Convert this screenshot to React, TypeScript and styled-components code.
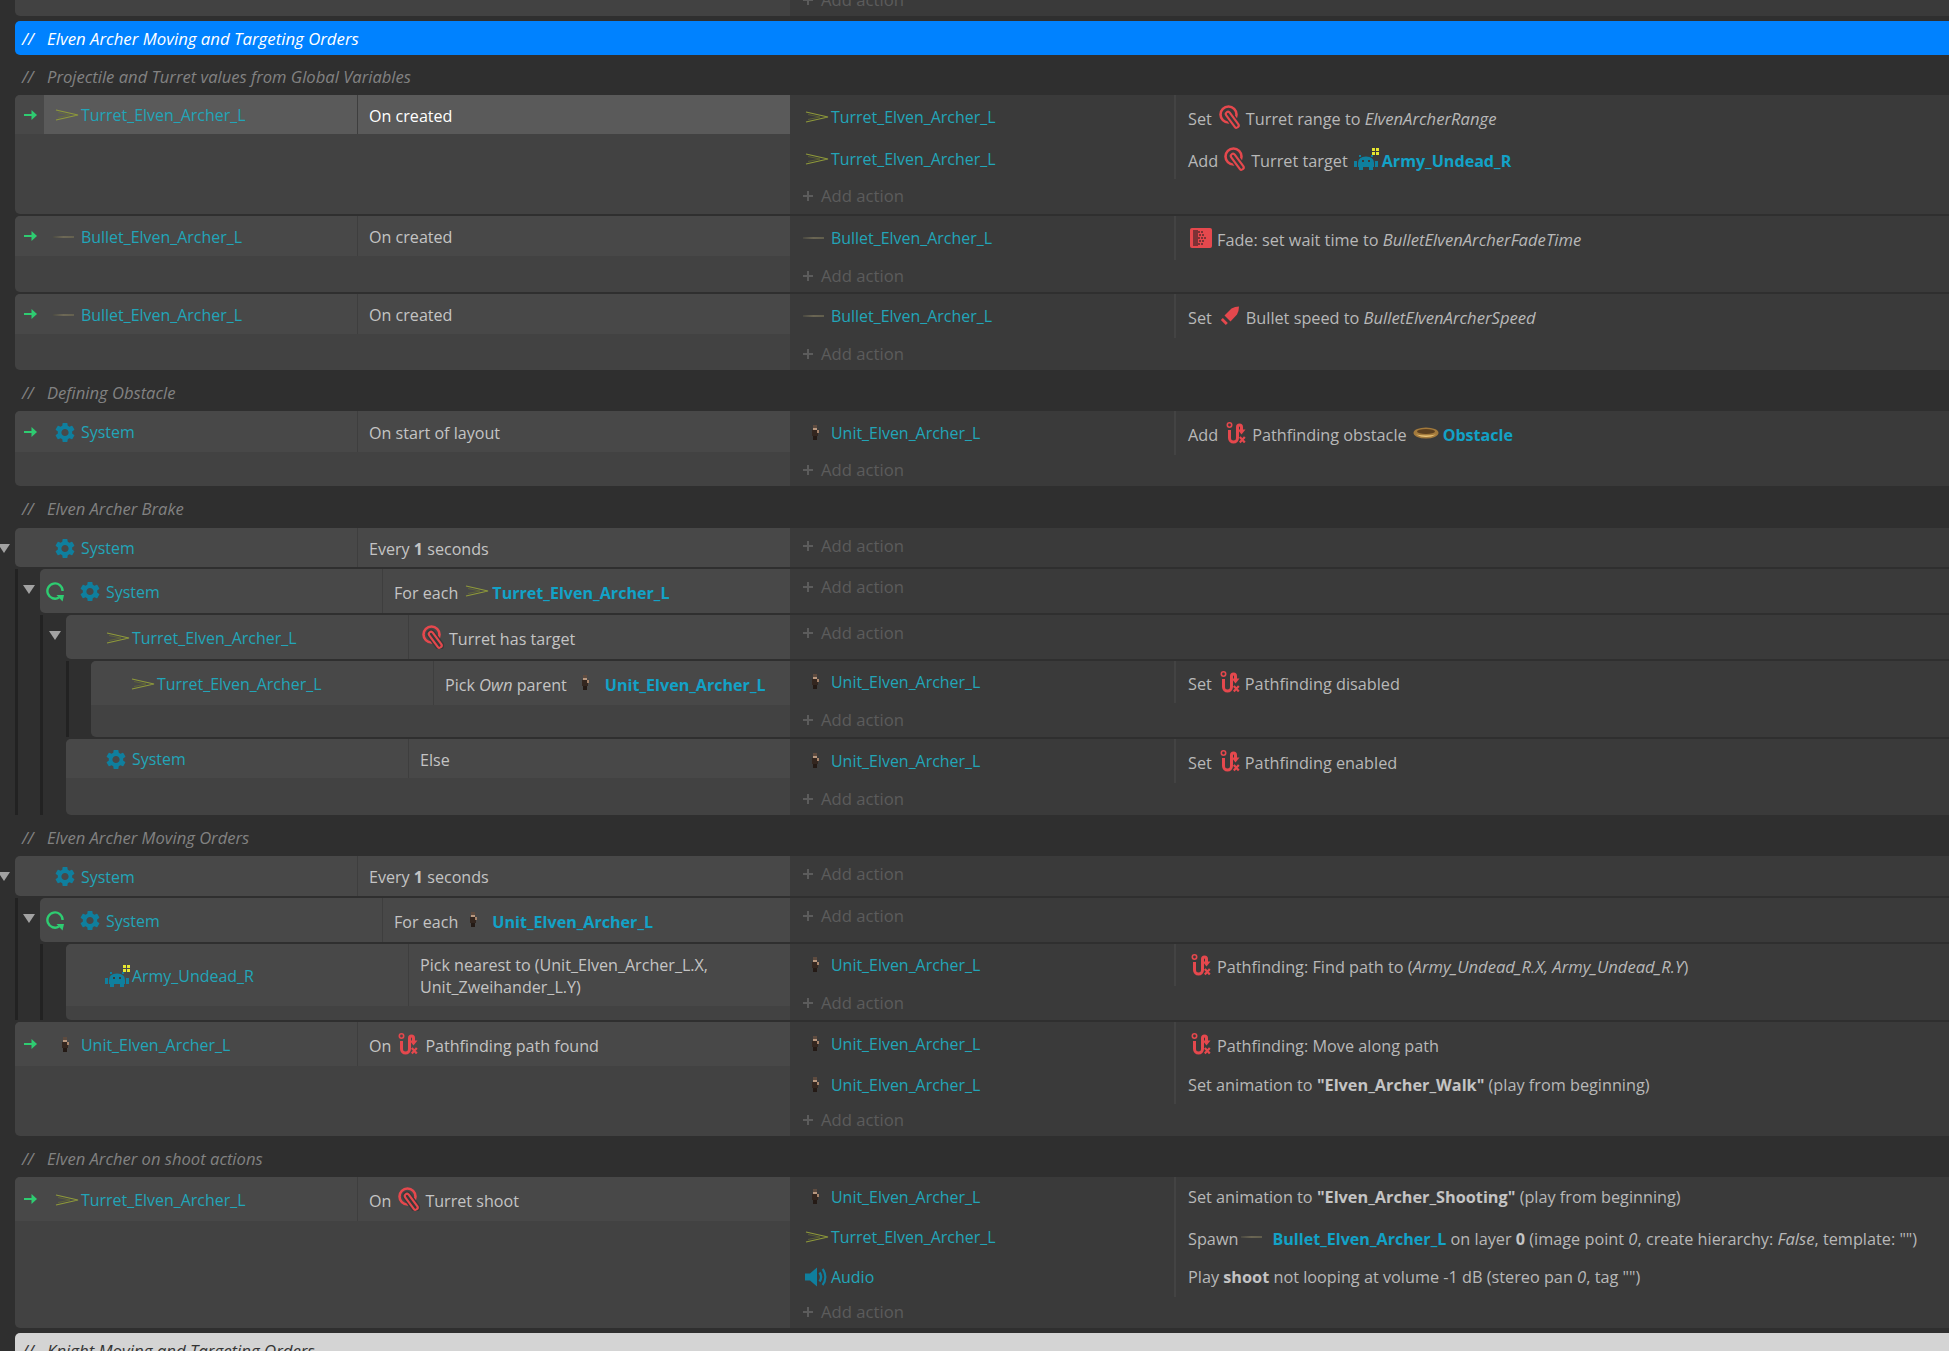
import React, { FC, ReactNode } from 'react';
import styled, { createGlobalStyle } from 'styled-components';
import { MdSettings } from 'react-icons/md';

const LEFT = [15, 40, 66, 91];

const GlobalStyle = createGlobalStyle`
  html, body {
    margin: 0;
    height: 100%;
    overflow: hidden;
    background: #2f2f2f;
  }
  body {
    font-family: "Open Sans", "Liberation Sans", sans-serif;
    font-size: 16.25px;
    line-height: 22px;
    color: #b8b8b8;
  }
`;

const Sheet = styled.div`
  display: flex;
  flex-direction: column;
  width: 1949px;
  height: 1351px;
  overflow: hidden;
  padding-left: 15px;
  box-sizing: border-box;
  background: #2f2f2f;
`;

const TopStub = styled.div`
  display: flex;
  height: 16px;
  flex: none;
  margin-bottom: 5px;
  overflow: hidden;
  border-bottom-left-radius: 5px;
`;

const TopCond = styled.div`
  width: 775px;
  flex: none;
  background: #424242;
`;

const TopActions = styled.div`
  flex: 1;
  background: #3a3a3a;
  margin-top: -16px;
  height: 32px;
`;

const Banner = styled.div<{ $light?: boolean }>`
  flex: none;
  display: flex;
  align-items: center;
  box-sizing: border-box;
  height: 34px;
  padding: 1px 0 0 7px;
  font-style: italic;
  font-size: 16.8px;
  background: ${p => (p.$light ? '#d4d4d4' : '#0082ff')};
  color: ${p => (p.$light ? '#333' : '#fff')};
  border-radius: 5px 0 0 5px;
`;

const Comment = styled.div<{ $h?: number }>`
  flex: none;
  display: flex;
  align-items: center;
  box-sizing: border-box;
  height: ${p => p.$h ?? 41}px;
  padding: 4px 0 0 7px;
  font-style: italic;
  font-size: 16.6px;
  color: #828282;
`;

const Slashes = styled.span`
  width: 25px;
  flex: none;
`;

const Section = styled.div`
  flex: none;
  display: flex;
  flex-direction: column;
  gap: 2px;
`;

const Group = styled.div<{ $pad: number }>`
  display: flex;
  flex-direction: column;
  gap: 2px;
  border-left: 3px solid #222;
  padding-left: ${p => p.$pad}px;
`;

const EventBox = styled.div`
  position: relative;
  display: flex;
`;

const Collapse = styled.span`
  position: absolute;
  left: -17px;
  top: 16px;
  width: 0;
  height: 0;
  border-left: 6px solid transparent;
  border-right: 6px solid transparent;
  border-top: 9px solid #a2a2a2;
`;

const Conditions = styled.div<{ $depth: number }>`
  flex: none;
  width: ${p => 790 - LEFT[p.$depth]}px;
  background: #424242;
  border-radius: 5px 0 0 5px;
  overflow: hidden;
`;

const CondRow = styled.div<{ $h: number }>`
  display: flex;
  height: ${p => p.$h}px;
  background: #484848;
`;

const Marker = styled.div`
  flex: none;
  width: 29px;
  padding-left: 2px;
  box-sizing: border-box;
  display: flex;
  align-items: center;
  justify-content: center;
`;

const ObjectCell = styled.div<{ $selected?: boolean }>`
  flex: none;
  width: 313px;
  box-sizing: border-box;
  padding: 1px 0 0 9px;
  display: flex;
  align-items: center;
  background: ${p => (p.$selected ? '#5a5a5a' : 'transparent')};
`;

const IconBox = styled.span`
  flex: none;
  width: 28px;
  display: flex;
  justify-content: center;
  align-items: center;
`;

const ObjectName = styled.span`
  color: #22a5b8;
  font-size: 15.95px;
  white-space: nowrap;
`;

const ConditionCell = styled.div<{ $selected?: boolean; $tall?: boolean }>`
  flex: 1;
  box-sizing: border-box;
  padding: ${p => (p.$tall ? 4 : 2)}px 0 0 11px;
  display: flex;
  align-items: center;
  white-space: nowrap;
  font-size: 16.1px;
  border-left: 1px solid #3e3e3e;
  color: ${p => (p.$selected ? '#fff' : '#c4c4c4')};
  background: ${p => (p.$selected ? '#5a5a5a' : 'transparent')};
`;

const Actions = styled.div`
  flex: 1;
  background: #3a3a3a;
  display: flex;
  flex-direction: column;
`;

const ActionRow = styled.div<{ $h: number }>`
  display: flex;
  height: ${p => p.$h}px;
  flex: none;
`;

const ActionObject = styled.div`
  flex: none;
  width: 386px;
  box-sizing: border-box;
  padding-left: 13px;
  display: flex;
  align-items: center;
  border-right: 2px solid #434343;
`;

const Param = styled.div<{ $plain?: boolean }>`
  flex: 1;
  box-sizing: border-box;
  padding: ${p => (p.$plain ? 0 : 3)}px 0 0 12px;
  display: flex;
  align-items: center;
  white-space: nowrap;
`;

const ParamLine = styled.span`
  display: block;
`;

const AddRow = styled.div<{ $h: number }>`
  display: flex;
  align-items: center;
  gap: 7px;
  box-sizing: border-box;
  height: ${p => p.$h}px;
  padding: 0 0 1px 12px;
  font-size: 16.7px;
  color: #5c5c5c;
  flex: none;
`;

const Ref = styled.b`
  color: #12a2c7;
  font-weight: 700;
  font-size: 16.1px;
`;

const Str = styled.b`
  color: #c4c4c4;
  font-weight: 700;
`;

const Var = styled.i`
  font-style: italic;
  font-size: 16.65px;
`;

// the uneven negative margins keep the line box at text height and lift the icon a little
const InlineIcon = styled.span<{ $mr?: number; $ml?: number }>`
  display: inline-block;
  line-height: 0;
  vertical-align: middle;
  margin: -11px ${p => p.$mr ?? 5}px -4px ${p => p.$ml ?? 6}px;

  svg {
    display: block;
  }
`;

// --- drawings

const RED = '#e5484d';
const TEAL = '#0f7f9e';

const TurretObj: FC = () => (
  <svg width="24" height="12" viewBox="0 0 24 12" fill="none">
    <path d="M1 1 L23 6 L1 11" stroke="#8f9a3a" strokeWidth="1.1" />
    <path d="M3 3.5 L15 6 L3 8.5" stroke="#6d7530" strokeWidth="0.6" />
  </svg>
);

const BulletSvg = styled.svg`
  margin-right: 4px;
`;

const BulletObj: FC = () => (
  <BulletSvg width="24" height="6" viewBox="0 0 24 6" fill="none">
    <defs>
      <linearGradient id="bulletFade" x1="0" x2="1" y1="0" y2="0">
        <stop offset="0" stopColor="#4c4b42" />
        <stop offset="0.5" stopColor="#77715a" />
        <stop offset="1" stopColor="#6a6650" />
      </linearGradient>
    </defs>
    <rect x="0" y="2.2" width="21" height="1.6" fill="url(#bulletFade)" />
  </BulletSvg>
);

const ArcherSvg = styled.svg`
  margin-right: 5px;
`;

const ArcherObj: FC = () => (
  <ArcherSvg width="10" height="16" viewBox="0 0 10 16">
    <rect x="3" y="0" width="4" height="4" fill="#5e4b3f" />
    <rect x="3" y="3" width="4" height="2" fill="#b9987f" />
    <rect x="2" y="5" width="6" height="6" fill="#33261f" />
    <rect x="7" y="5" width="2" height="3" fill="#a58269" />
    <rect x="3" y="11" width="4" height="4" fill="#241a15" />
  </ArcherSvg>
);

const ArmyIcon: FC = () => (
  <svg width="26" height="22" viewBox="0 0 26 22">
    <path fill={TEAL} d="M5 7h2v2h-2zM17 7h2v2h-2z" />
    <path fill={TEAL} d="M4 15 Q4 8.5 12 8.5 Q20 8.5 20 15 V19 H4z" />
    <path fill={TEAL} d="M0 13h3v6H0zM21 13h3v6h-3zM5 19h4v3H5zM15 19h4v3h-4z" />
    <rect x="8" y="12" width="2" height="2" fill="#3a3a3a" />
    <rect x="14" y="12" width="2" height="2" fill="#3a3a3a" />
    <rect x="18" y="0" width="3" height="3" fill="#e6e630" />
    <rect x="22" y="0" width="3" height="3" fill="#e6e630" />
    <rect x="18" y="4" width="3" height="3" fill="#e6e630" />
    <rect x="22" y="4" width="3" height="3" fill="#e6e630" />
  </svg>
);

const ObstacleIcon: FC = () => (
  <svg width="26" height="14" viewBox="0 0 26 14">
    <ellipse cx="13" cy="7" rx="12.5" ry="5.5" fill="#a37a3c" />
    <ellipse cx="13" cy="5.5" rx="9" ry="2.6" fill="#5c4020" />
    <path d="M3 8.5 Q13 13.5 23 8.5 Q13 10.5 3 8.5z" fill="#eec77a" />
  </svg>
);

const AudioSvg = styled.svg`
  margin-right: 3px;
`;

const AudioIcon: FC = () => (
  <AudioSvg width="22" height="22" viewBox="0 0 22 22" fill="none">
    <path d="M0 7.5h5l7-6v19l-7-6H0z" fill={TEAL} />
    <path d="M14.5 6.5c2 2.8 2 6.2 0 9" stroke={TEAL} strokeWidth="2.4" />
    <path d="M17.5 3c3.8 4.6 3.8 11.400 0 16" stroke={TEAL} strokeWidth="2.2" />
  </AudioSvg>
);

const GearIcon = styled(MdSettings)`
  margin-right: 4px;
`;

const Gear: FC = () => <GearIcon size={27} color={TEAL} />;

const LoopIcon: FC = () => (
  <svg width="19" height="22" viewBox="0 0 19 22" fill="none">
    <path d="M13 17.5A7.6 7.6 0 1 1 16.6 11" stroke="#2ecc71" strokeWidth="2.4" />
    <path d="M10.5 15 L18 15 L16.5 21.5z" fill="#2ecc71" />
  </svg>
);

const GoArrow: FC = () => (
  <svg width="14" height="12" viewBox="0 0 14 12" fill="none">
    <path d="M0 6H11" stroke="#2ecc71" strokeWidth="2.2" />
    <path d="M7.5 1 L13 6 L7.5 11z" fill="#2ecc71" />
  </svg>
);

const TurretBeh: FC = () => (
  <svg width="22" height="24" viewBox="0 0 22 24" fill="none">
    <circle cx="9.5" cy="9.5" r="8" stroke={RED} strokeWidth="2.6" />
    <path d="M9 9L17.5 20.5" stroke="#3a3a3a" strokeWidth="9.5" strokeLinecap="round" />
    <path d="M9 9L17.5 20.5" stroke={RED} strokeWidth="6.5" strokeLinecap="round" />
    <path d="M9 9L17.5 20.5" stroke="#3a3a3a" strokeWidth="2.2" strokeLinecap="round" />
  </svg>
);

const PathBeh: FC = () => (
  <svg width="20" height="22" viewBox="0 0 20 22" fill="none">
    <circle cx="3.5" cy="3" r="2.2" stroke={RED} strokeWidth="1.6" />
    <path d="M3.5 8v8a4 4 0 0 0 8 0V5a2 2 0 0 1 4 0v3" stroke={RED} strokeWidth="3" />
    <path d="M11.5 7.5 L15.5 12.5 L19.5 7.5z" fill={RED} />
    <path d="M13.8 15 L18.8 20.5 M18.8 15 L13.8 20.5" stroke={RED} strokeWidth="2.2" />
  </svg>
);

const FadeBeh: FC = () => (
  <svg width="22" height="20" viewBox="0 0 22 20">
    <rect width="22" height="20" rx="2" fill={RED} />
    <path d="M3 2h5v16H3z" fill="#7d3236" />
    <g fill="#7d3236">
      <rect x="8" y="3" width="2" height="2" />
      <rect x="11" y="3" width="2" height="2" />
      <rect x="9" y="6" width="2" height="2" />
      <rect x="12" y="6" width="2" height="2" />
      <rect x="8" y="9" width="2" height="2" />
      <rect x="11" y="9" width="2" height="2" />
      <rect x="14" y="9" width="2" height="2" />
      <rect x="9" y="12" width="2" height="2" />
      <rect x="12" y="12" width="2" height="2" />
      <rect x="8" y="15" width="2" height="2" />
      <rect x="11" y="15" width="2" height="2" />
    </g>
  </svg>
);

const BulletBeh: FC = () => (
  <svg width="20" height="20" viewBox="0 0 20 20">
    <path d="M4.5 9.5 L11.5 2.5 Q15 0.5 19 0.5 Q19 4.5 17 8.5 L10.5 15.5z" fill={RED} />
    <path d="M2.8 12 L7.8 17 L5.8 19 L0.8 14z" fill={RED} />
  </svg>
);

const PlusIcon: FC = () => (
  <svg width="12" height="12" viewBox="0 0 12 12">
    <path d="M6 1V11M1 6H11" stroke="#5c5c5c" strokeWidth="2" />
  </svg>
);

// --- sheet parts

const Add: FC<{ h: number }> = ({ h }) => (
  <AddRow $h={h}>
    <PlusIcon />
    Add action
  </AddRow>
);

interface ActionProps {
  h: number;
  icon: ReactNode;
  name: string;
  plain?: boolean;
  children: ReactNode;
}

const Action: FC<ActionProps> = ({ h, icon, name, plain, children }) => (
  <ActionRow $h={h}>
    <ActionObject>
      <IconBox>{icon}</IconBox>
      <ObjectName>{name}</ObjectName>
    </ActionObject>
    <Param $plain={plain}>
      <ParamLine>{children}</ParamLine>
    </Param>
  </ActionRow>
);

interface EventProps {
  depth?: number;
  rowH: number;
  icon: ReactNode;
  name: string;
  cond: ReactNode;
  marker?: ReactNode;
  selected?: boolean;
  collapsible?: boolean;
  children: ReactNode;
}

const SheetEvent: FC<EventProps> = ({
  depth = 0,
  rowH,
  icon,
  name,
  cond,
  marker,
  selected,
  collapsible,
  children,
}) => (
  <EventBox>
    {collapsible && <Collapse />}
    <Conditions $depth={depth}>
      <CondRow $h={rowH}>
        <Marker>{marker}</Marker>
        <ObjectCell $selected={selected}>
          <IconBox>{icon}</IconBox>
          <ObjectName>{name}</ObjectName>
        </ObjectCell>
        <ConditionCell $selected={selected} $tall={rowH === 44}>
          <span>{cond}</span>
        </ConditionCell>
      </CondRow>
    </Conditions>
    <Actions>{children}</Actions>
  </EventBox>
);

const CommentLine: FC<{ h?: number; children: ReactNode }> = ({ h, children }) => (
  <Comment $h={h}>
    <Slashes>//</Slashes>
    {children}
  </Comment>
);

const KnightBar = styled(Banner)`
  margin-top: 5px;
  border-radius: 5px 0 0 0;
`;

const TURRET = 'Turret_Elven_Archer_L';
const BULLET = 'Bullet_Elven_Archer_L';
const UNIT = 'Unit_Elven_Archer_L';

const App: FC = () => (
  <Sheet>
    <GlobalStyle />
    <TopStub>
      <TopCond />
      <TopActions>
        <Add h={32} />
      </TopActions>
    </TopStub>

    <Banner>
      <Slashes>//</Slashes>
      Elven Archer Moving and Targeting Orders
    </Banner>

    <CommentLine h={40}>Projectile and Turret values from Global Variables</CommentLine>
    <Section>
      <SheetEvent rowH={39} selected marker={<GoArrow />} icon={<TurretObj />} name={TURRET} cond="On created">
        <Action h={44} icon={<TurretObj />} name={TURRET}>
          Set
          <InlineIcon $ml={7}>
            <TurretBeh />
          </InlineIcon>
          Turret range to <Var>ElvenArcherRange</Var>
        </Action>
        <Action h={40} icon={<TurretObj />} name={TURRET}>
          Add
          <InlineIcon>
            <TurretBeh />
          </InlineIcon>
          Turret target
          <InlineIcon $mr={2}>
            <ArmyIcon />
          </InlineIcon>
          <Ref>Army_Undead_R</Ref>
        </Action>
        <Add h={35} />
      </SheetEvent>
      <SheetEvent rowH={40} marker={<GoArrow />} icon={<BulletObj />} name={BULLET} cond="On created">
        <Action h={44} icon={<BulletObj />} name={BULLET}>
          <InlineIcon $ml={2} $mr={5}>
            <FadeBeh />
          </InlineIcon>
          Fade: set wait time to <Var>BulletElvenArcherFadeTime</Var>
        </Action>
        <Add h={32} />
      </SheetEvent>
      <SheetEvent rowH={40} marker={<GoArrow />} icon={<BulletObj />} name={BULLET} cond="On created">
        <Action h={44} icon={<BulletObj />} name={BULLET}>
          Set
          <InlineIcon $ml={8} $mr={6}>
            <BulletBeh />
          </InlineIcon>
          Bullet speed to <Var>BulletElvenArcherSpeed</Var>
        </Action>
        <Add h={32} />
      </SheetEvent>
    </Section>

    <CommentLine>Defining Obstacle</CommentLine>
    <Section>
      <SheetEvent rowH={41} marker={<GoArrow />} icon={<Gear />} name="System" cond="On start of layout">
        <Action h={44} icon={<ArcherObj />} name={UNIT}>
          Add
          <InlineIcon $ml={8} $mr={6}>
            <PathBeh />
          </InlineIcon>
          Pathfinding obstacle
          <InlineIcon $mr={4}>
            <ObstacleIcon />
          </InlineIcon>
          <Ref>Obstacle</Ref>
        </Action>
        <Add h={31} />
      </SheetEvent>
    </Section>

    <CommentLine h={42}>Elven Archer Brake</CommentLine>
    <Section>
      <SheetEvent
        rowH={39}
        collapsible
        icon={<Gear />}
        name="System"
        cond={
          <>
            Every <Str>1</Str> seconds
          </>
        }
      >
        <Add h={36} />
      </SheetEvent>
      <Group $pad={22}>
        <SheetEvent
          depth={1}
          rowH={44}
          collapsible
          marker={<LoopIcon />}
          icon={<Gear />}
          name="System"
          cond={
            <>
              For each
              <InlineIcon $ml={7} $mr={3}>
                <TurretObj />
              </InlineIcon>
              <Ref>{TURRET}</Ref>
            </>
          }
        >
          <Add h={36} />
        </SheetEvent>
        <Group $pad={23}>
          <SheetEvent
            depth={2}
            rowH={44}
            collapsible
            icon={<TurretObj />}
            name={TURRET}
            cond={
              <>
                <InlineIcon $ml={2} $mr={5}>
                  <TurretBeh />
                </InlineIcon>
                Turret has target
              </>
            }
          >
            <Add h={36} />
          </SheetEvent>
          <Group $pad={22}>
            <SheetEvent
              depth={3}
              rowH={44}
              icon={<TurretObj />}
              name={TURRET}
              cond={
                <>
                  Pick <Var>Own</Var> parent
                  <InlineIcon $ml={13} $mr={10}>
                    <ArcherObj />
                  </InlineIcon>
                  <Ref>{UNIT}</Ref>
                </>
              }
            >
              <Action h={42} icon={<ArcherObj />} name={UNIT}>
                Set
                <InlineIcon $ml={8} $mr={5}>
                  <PathBeh />
                </InlineIcon>
                Pathfinding disabled
              </Action>
              <Add h={34} />
            </SheetEvent>
          </Group>
          <SheetEvent depth={2} rowH={39} icon={<Gear />} name="System" cond="Else">
            <Action h={44} icon={<ArcherObj />} name={UNIT}>
              Set
              <InlineIcon $ml={8} $mr={5}>
                <PathBeh />
              </InlineIcon>
              Pathfinding enabled
            </Action>
            <Add h={32} />
          </SheetEvent>
        </Group>
      </Group>
    </Section>

    <CommentLine>Elven Archer Moving Orders</CommentLine>
    <Section>
      <SheetEvent
        rowH={40}
        collapsible
        icon={<Gear />}
        name="System"
        cond={
          <>
            Every <Str>1</Str> seconds
          </>
        }
      >
        <Add h={36} />
      </SheetEvent>
      <Group $pad={22}>
        <SheetEvent
          depth={1}
          rowH={44}
          collapsible
          marker={<LoopIcon />}
          icon={<Gear />}
          name="System"
          cond={
            <>
              For each
              <InlineIcon $ml={10} $mr={9}>
                <ArcherObj />
              </InlineIcon>
              <Ref>{UNIT}</Ref>
            </>
          }
        >
          <Add h={36} />
        </SheetEvent>
        <Group $pad={23}>
          <SheetEvent
            depth={2}
            rowH={62}
            icon={<ArmyIcon />}
            name="Army_Undead_R"
            cond={
              <>
                Pick nearest to (Unit_Elven_Archer_L.X,
                <br />
                Unit_Zweihander_L.Y)
              </>
            }
          >
            <Action h={42} icon={<ArcherObj />} name={UNIT}>
              <InlineIcon $ml={3} $mr={6}>
                <PathBeh />
              </InlineIcon>
              Pathfinding: Find path to (<Var>Army_Undead_R.X, Army_Undead_R.Y</Var>)
            </Action>
            <Add h={34} />
          </SheetEvent>
        </Group>
      </Group>
      <SheetEvent
        rowH={44}
        marker={<GoArrow />}
        icon={<ArcherObj />}
        name={UNIT}
        cond={
          <>
            On
            <InlineIcon $ml={7} $mr={7}>
              <PathBeh />
            </InlineIcon>
            Pathfinding path found
          </>
        }
      >
        <Action h={44} icon={<ArcherObj />} name={UNIT}>
          <InlineIcon $ml={3} $mr={6}>
            <PathBeh />
          </InlineIcon>
          Pathfinding: Move along path
        </Action>
        <Action h={38} plain icon={<ArcherObj />} name={UNIT}>
          Set animation to <Str>"Elven_Archer_Walk"</Str> (play from beginning)
        </Action>
        <Add h={32} />
      </SheetEvent>
    </Section>

    <CommentLine>Elven Archer on shoot actions</CommentLine>
    <Section>
      <SheetEvent
        rowH={44}
        marker={<GoArrow />}
        icon={<TurretObj />}
        name={TURRET}
        cond={
          <>
            On
            <InlineIcon $ml={7} $mr={5}>
              <TurretBeh />
            </InlineIcon>
            Turret shoot
          </>
        }
      >
        <Action h={40} plain icon={<ArcherObj />} name={UNIT}>
          Set animation to <Str>"Elven_Archer_Shooting"</Str> (play from beginning)
        </Action>
        <Action h={40} icon={<TurretObj />} name={TURRET}>
          Spawn
          <InlineIcon $ml={3} $mr={3}>
            <BulletObj />
          </InlineIcon>
          <Ref>{BULLET}</Ref> on layer <Str>0</Str> (image point <Var>0</Var>, create hierarchy:{' '}
          <Var>False</Var>, template: "")
        </Action>
        <Action h={40} plain icon={<AudioIcon />} name="Audio">
          Play <Str>shoot</Str> not looping at volume -1 dB (stereo pan <Var>0</Var>, tag "")
        </Action>
        <Add h={31} />
      </SheetEvent>
    </Section>

    <KnightBar $light>
      <Slashes>//</Slashes>
      Knight Moving and Targeting Orders
    </KnightBar>
  </Sheet>
);

export default App;
